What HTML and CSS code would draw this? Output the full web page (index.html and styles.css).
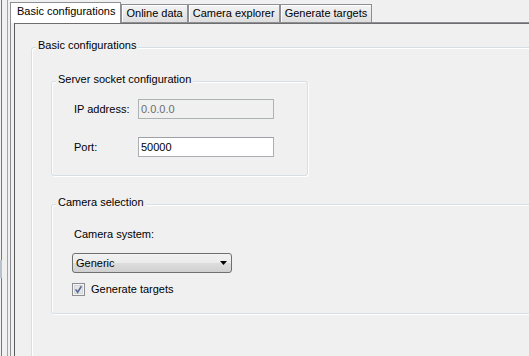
FILE: index.html
```html
<!DOCTYPE html>
<html>
<head>
	<meta charset="utf-8">
	<link rel="stylesheet" href="styles.css">
</head>
<body>
	<div class="window">
		<div class="edge"><div class="edge-mark"></div></div>
		<div class="tabwidget">
			<div class="tabbar">
				<div class="tab current">Basic configurations</div>
				<div class="tab">Online data</div>
				<div class="tab">Camera explorer</div>
				<div class="tab">Generate targets</div>
			</div>
			<div class="pane">
				<div class="frame">
					<div class="group outer">
						<div class="group-title">Basic configurations</div>

						<div class="group server">
							<div class="group-title">Server socket configuration</div>
							<div class="group-body">
								<div class="field">
									<span class="label">IP address:</span>
									<span class="input disabled">0.0.0.0</span>
								</div>
								<div class="field">
									<span class="label">Port:</span>
									<span class="input">50000</span>
								</div>
							</div>
						</div>

						<div class="group camera">
							<div class="group-title">Camera selection</div>
							<div class="group-body">
								<div class="caption">Camera system:</div>
								<div class="combo">
									<span>Generic</span>
									<svg width="7" height="4" viewBox="0 0 7 4"><path d="M0 0H7L3.5 4Z" fill="#000"/></svg>
								</div>
								<div class="check">
									<svg width="13" height="13" viewBox="0 0 13 13">
										<rect x="0.5" y="0.5" width="12" height="12" fill="#f4f4f4" stroke="#8e8f8f"/>
										<rect x="2.5" y="2.5" width="8" height="8" fill="#e4e6ea" stroke="#d3d6db"/>
										<path d="M3.6 6.4 L5.6 9.2 L9.4 3.2" fill="none" stroke="#5a6a90" stroke-width="1.6"/>
									</svg>
									<span>Generate targets</span>
								</div>
							</div>
						</div>
					</div>
				</div>
			</div>
		</div>
	</div>
</body>
</html>
```

FILE: styles.css
```css
body {
	margin: 0;
	background: #f0f0f0;
	font-family: "Liberation Sans", Arial, sans-serif;
	font-size: 11px;
	line-height: 13px;
	color: #000;
	overflow: hidden;
}

.window {
	display: flex;
	width: 529px;
	height: 356px;
	overflow: hidden;
}

/* leftover bits of the splitter on the left */
.edge {
	flex: none;
	width: 5px;
	margin-left: 1px;
	border-left: 1px solid #777;
	border-right: 1px solid #a2a2aa;
}

.edge-mark {
	margin: 260px 0 0 -2px;
	width: 2px;
	height: 18px;
	background: #b8c2cc;
}

.tabwidget {
	flex: 1;
	min-width: 0;
	display: flex;
	flex-direction: column;
	margin-left: 2px;
}

.tabbar {
	flex: none;
	display: flex;
	align-items: flex-end;
	height: 22px;
	position: relative;
	z-index: 1;
}

.tab {
	height: 15px;
	padding: 2px 4px 0;
	border: 1px solid #8e8f94;
	border-bottom: none;
	background: linear-gradient(#f4f4f4, #dedede);
	box-shadow: inset 1px 1px 0 #fff;
	white-space: nowrap;
}

.tab.current {
	height: 18px;
	padding: 2px 5px 0 6px;
	margin-bottom: -1px;
	background: #fff;
	box-shadow: none;
}

.pane {
	flex: 1;
	display: flex;
	border-top: 1px solid #8e8f94;
	border-left: 1px solid #8e8f94;
	padding-left: 3px;
}

.frame {
	flex: 1;
	border-top: 1px solid #6e6e6e;
	border-left: 1px solid #5a5a5a;
}

.group {
	border: 1px solid #d5dfe5;
	border-radius: 3px;
	box-shadow: inset 1px 1px 0 #fff, 1px 1px 0 #fff;
}

.group-title {
	width: fit-content;
	margin: -9px 0 0 4px;
	padding: 0 2px;
	background: #f0f0f0;
	white-space: nowrap;
}

.outer {
	margin: 23px 0 0 16px;
	width: 600px;
	height: 400px;
}

.server {
	box-sizing: border-box;
	width: 257px;
	margin: 29px 0 0 19px;
}

.server .group-body {
	padding: 0 0 18px 22px;
}

.field {
	display: flex;
	align-items: center;
	height: 20px;
	margin-top: 13px;
}

.field + .field {
	margin-top: 18px;
}

.label {
	width: 64px;
}

.input {
	box-sizing: border-box;
	width: 136px;
	height: 20px;
	padding: 0 2px;
	line-height: 18px;
	border: 1px solid #abadb3;
	border-top-color: #9ea0a6;
	background: #fff;
}

.input.disabled {
	border-color: #adb2b5;
	background: #f0f0f0;
	color: #6d6d6d;
}

.camera {
	width: 600px;
	margin: 28px 0 0 19px;
}

.camera .group-body {
	padding: 0 0 17px 20px;
}

.caption {
	margin-top: 19px;
	padding-left: 2px;
}

.combo {
	box-sizing: border-box;
	display: flex;
	align-items: center;
	justify-content: space-between;
	width: 160px;
	height: 20px;
	margin-top: 12px;
	padding: 0 4px 0 3px;
	border: 1px solid #707070;
	border-radius: 3px;
	background: linear-gradient(#f2f2f2 0%, #ebebeb 50%, #dddddd 51%, #d0d0d0 100%);
}

.check {
	display: flex;
	align-items: center;
	height: 13px;
	margin-top: 10px;
}

.check svg {
	margin-right: 6px;
}
```
